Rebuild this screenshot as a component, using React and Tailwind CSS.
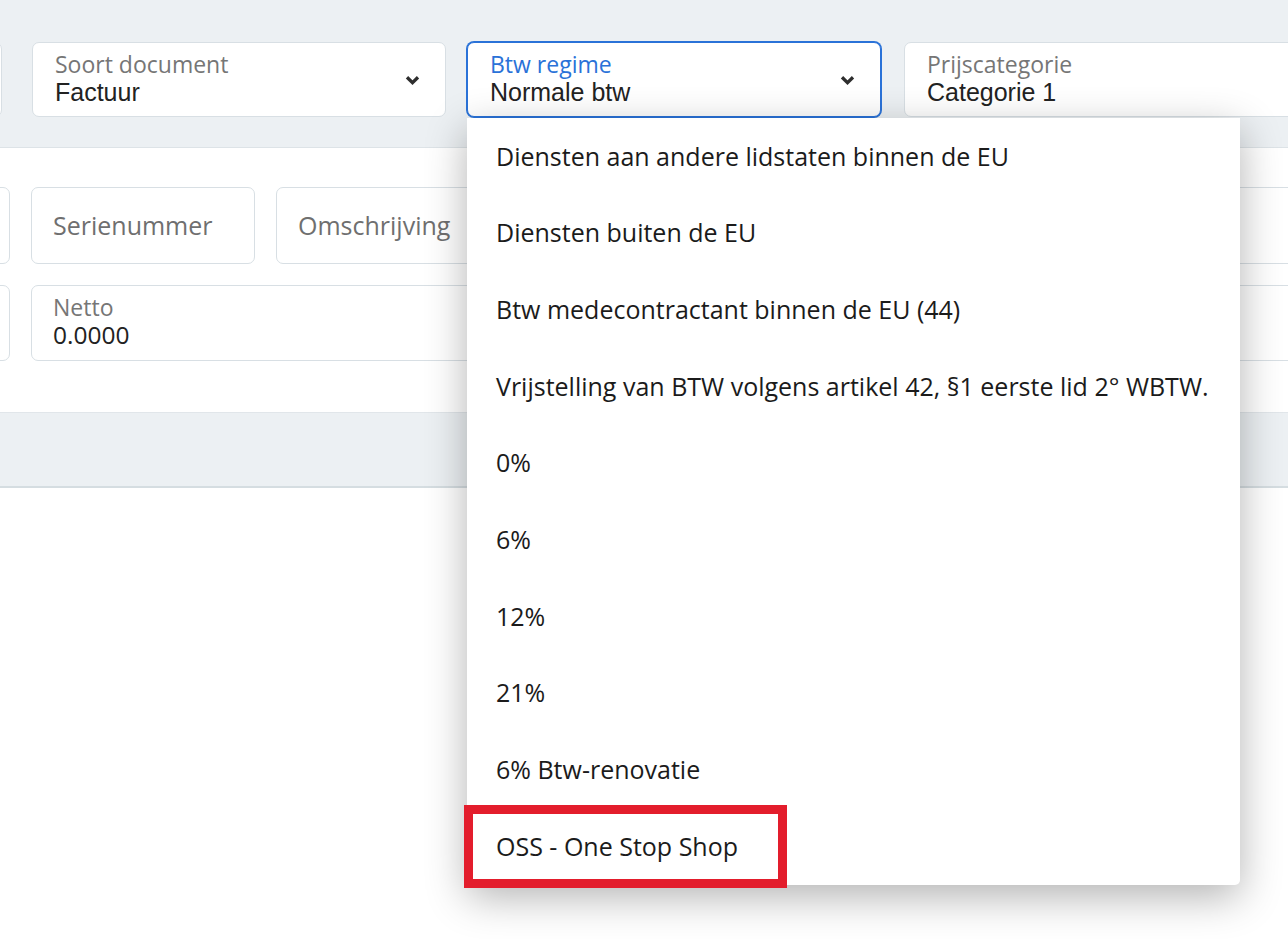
import React from "react";

const opties = [
  "Diensten aan andere lidstaten binnen de EU",
  "Diensten buiten de EU",
  "Btw medecontractant binnen de EU (44)",
  "Vrijstelling van BTW volgens artikel 42, §1 eerste lid 2° WBTW.",
  "0%",
  "6%",
  "12%",
  "21%",
  "6% Btw-renovatie",
  "OSS - One Stop Shop",
];

const Chevron = () => (
  <svg width="15" height="10" viewBox="0 0 15 10" className="shrink-0">
    <path d="M2 2.2 L7.5 7.6 L13 2.2" fill="none" stroke="#2e2e2e" strokeWidth="3.3" />
  </svg>
);

const SelectBox = ({ label, value, focused, chevron = true, className = "", children }) => (
  <div
    className={`relative shrink-0 w-[414px] h-[75px] rounded-[7px] bg-white border flex items-center pl-[22px] pr-[25px] ${className} ${
      focused ? "border-[#2a72d8] ring-1 ring-[#2a72d8]" : "border-[#d8dfe4]"
    }`}
  >
    <div className="flex-1 flex flex-col -mt-[1px]">
      <span
        className={`text-[23px] leading-[23px] ${focused ? "text-[#2a72d8]" : "text-[#767676]"}`}
      >
        {label}
      </span>
      <span className="mt-[4px] text-[25px] leading-[25px] text-[#222] font-['Liberation_Sans',Arial,sans-serif]">
        {value}
      </span>
    </div>
    {chevron && <Chevron />}
    {children}
  </div>
);

const Dropdown = () => (
  <div className="absolute left-[-1px] top-[calc(100%+2px)] w-[773px] bg-white rounded-b-[5px] shadow-[0_12px_42px_rgba(0,0,0,0.3)] z-20">
    {opties.map((o, i) => (
      <div key={o} className="relative h-[76.7px] flex items-center pl-[29px] text-[25px] text-[#1b1b1b]">
        {o}
        {i === opties.length - 1 && (
          <div className="absolute left-[-3px] top-[-3px] w-[323px] bottom-[-3px] border-[9px] border-[#e31d2c]" />
        )}
      </div>
    ))}
  </div>
);

export default function App() {
  return (
    <div className="w-[1288px] h-[939px] overflow-hidden bg-white font-['Open_Sans',sans-serif]">
      <div className="h-[148px] bg-[#ecf0f3] border-b border-[#dde3e7] pt-[42px] flex gap-[21px]">
        <div className="shrink-0 w-[415px] h-[75px] -ml-[413px] mr-[9px] rounded-[7px] bg-white border border-[#d8dfe4]" />
        <SelectBox label="Soort document" value="Factuur" />
        <SelectBox label="Btw regime" value="Normale btw" focused>
          <Dropdown />
        </SelectBox>
        <SelectBox label="Prijscategorie" value="Categorie 1" chevron={false} className="ml-[2px]" />
      </div>

      <div className="h-[264px] pt-[39px] flex flex-col gap-[21px]">
        <div className="flex gap-[21px] h-[77px]">
          <div className="shrink-0 w-[200px] -ml-[190px] rounded-[7px] border border-[#d8dfe4]" />
          <div className="shrink-0 w-[224px] rounded-[7px] border border-[#d8dfe4] flex items-center pl-[21px] text-[25px] text-[#6f6f6f]">
            Serienummer
          </div>
          <div className="flex-1 -mr-[30px] rounded-[7px] border border-[#d8dfe4] flex items-center pl-[21px] text-[25px] text-[#6f6f6f]">
            Omschrijving
          </div>
        </div>
        <div className="flex gap-[21px] h-[76px]">
          <div className="shrink-0 w-[200px] -ml-[190px] rounded-[7px] border border-[#d8dfe4]" />
          <div className="flex-1 -mr-[30px] rounded-[7px] border border-[#d8dfe4] flex flex-col pl-[21px] pt-[10px]">
            <span className="text-[23px] leading-[23px] text-[#767676]">Netto</span>
            <span className="mt-[3px] text-[24.5px] leading-[25px] text-[#222]">0.0000</span>
          </div>
        </div>
      </div>

      <div className="h-[76px] bg-[#ecf0f3] border-t border-[#e1e6ea] border-b-2 border-b-[#d5dde1]" />
    </div>
  );
}
